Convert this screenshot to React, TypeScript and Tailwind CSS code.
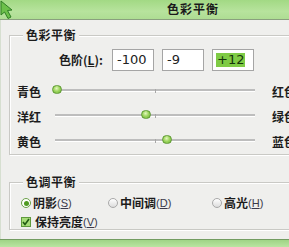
import React from "react";

const cjk = "font-['Noto_Sans_CJK_SC',sans-serif]";

function Slider({ left, right, value }: { left: string; right: string; value: number }) {
  const center = 2 + (value + 100) * 0.98;
  return (
    <div className="flex items-center h-[25px] pl-[7px]">
      <span className="w-[38px] text-[12px] font-semibold text-[#1c1c1c] leading-none">{left}</span>
      <div className="relative w-[200px] h-[10px] flex items-center -mt-[3px]">
        <div className="w-full h-[3px] border-t-2 border-[#bdbdbd] border-b border-b-white" />
        <div className="absolute left-[100px] top-[4px] w-px h-[4px] bg-[#a8a8a8]" />
        <div
          className="absolute top-[0px] w-[10px] h-[9px] rounded-full border border-[#5e9a34] bg-[radial-gradient(circle_at_45%_35%,#e4f8c0_0%,#9fd660_45%,#6cb234_100%)]"
          style={{ left: `${center - 5}px` }}
        />
      </div>
      <span className="ml-[17px] text-[12px] font-semibold text-[#1c1c1c] leading-none whitespace-nowrap">{right}</span>
    </div>
  );
}

function Radio({ checked, label, acc }: { checked?: boolean; label: string; acc: string }) {
  return (
    <div className="flex items-center">
      <span
        className={
          checked
            ? "w-[10px] h-[10px] rounded-full border border-[#6aa048] bg-white flex items-center justify-center"
            : "w-[10px] h-[10px] rounded-full border border-[#a9a9a9] bg-[linear-gradient(#ffffff,#dcdcdc)]"
        }
      >
        {checked && <span className="w-[5px] h-[5px] rounded-full bg-[#4f9a22]" />}
      </span>
      <span className="ml-[2px] text-[12px] font-semibold text-[#1c1c1c] leading-none">{label}</span>
      <span className="text-[11px] text-[#3a3a4a] leading-none font-['Liberation_Sans',sans-serif]">
        (<span className="underline">{acc}</span>)
      </span>
    </div>
  );
}

export default function App() {
  return (
    <div className={`w-[289px] h-[247px] overflow-hidden bg-[#efefed] flex flex-col ${cjk}`}>
      {/* title bar */}
      <div className="h-[20px] shrink-0 flex items-start bg-[linear-gradient(#a2d984,#b7e39d_60%,#aedd93)] border-b border-[#8aa07e]">
        <svg width="14" height="19" viewBox="0 0 14 19" className="shrink-0">
          <polygon points="1,1 1,15 4.5,12 8,18.5 11,17 7.5,10.5 12,10" fill="#6cc04a" stroke="#2f7d25" strokeWidth="1" />
        </svg>
        <span className="ml-[153px] mt-[2px] text-[12px] font-bold text-[#1a1a1a] leading-[14px] tracking-[1px]">色彩平衡</span>
      </div>

      <div className="flex-1 flex">
        <div className="w-[3px] bg-[#b3e199] border-r border-[#d6dfd0]" />
        <div className="flex-1 flex flex-col">
          {/* group 1 */}
          <div className="relative ml-[8px] mt-[15px] w-[300px] h-[120px] shrink-0 border border-[#c9c9c5] shadow-[inset_1px_1px_0_#ffffff,1px_1px_0_#ffffff] pt-[13px]">
            <span className="absolute left-[13px] top-[-8px] px-[3px] bg-[#efefed] text-[12px] font-bold text-[#1c1c1c] leading-[14px] tracking-[0.5px]">
              色彩平衡
            </span>
            <div className="flex items-center h-[22px] pl-[49px]">
              <span className="w-[53px] text-[12px] font-semibold text-[#1c1c1c] leading-none whitespace-nowrap">
                色阶(<span className="underline">L</span>):
              </span>
              <div className="flex gap-[8px] font-['DejaVu_Sans',sans-serif] text-[13px] text-[#222]">
                <div className="w-[42px] h-[22px] bg-white border border-[#a5a5a5] flex items-center pl-[4px]">-100</div>
                <div className="w-[42px] h-[22px] bg-white border border-[#a5a5a5] flex items-center pl-[4px]">-9</div>
                <div className="w-[42px] h-[22px] bg-white border border-[#a5a5a5] flex items-center pl-[3px]">
                  <span className="bg-[#7fcb45] px-[1px] leading-[14px] text-[#16340b]">+12</span>
                </div>
              </div>
            </div>
            <div className="mt-[8px]">
              <Slider left="青色" right="红色" value={-100} />
              <Slider left="洋红" right="绿色" value={-9} />
              <Slider left="黄色" right="蓝色" value={12} />
            </div>
          </div>

          {/* group 2 */}
          <div className="relative ml-[8px] mt-[27px] w-[300px] h-[48px] shrink-0 border border-[#c9c9c5] shadow-[inset_1px_1px_0_#ffffff,1px_1px_0_#ffffff] pt-[13px] pl-[11px] flex flex-col gap-[5px]">
            <span className="absolute left-[13px] top-[-8px] px-[3px] bg-[#efefed] text-[12px] font-bold text-[#1c1c1c] leading-[14px] tracking-[0.5px]">
              色调平衡
            </span>
            <div className="flex items-center h-[14px]">
              <div className="w-[87px]"><Radio checked label="阴影" acc="S" /></div>
              <div className="w-[104px]"><Radio label="中间调" acc="D" /></div>
              <Radio label="高光" acc="H" />
            </div>
            <div className="flex items-center h-[14px]">
              <svg width="10" height="10" viewBox="0 0 10 10" className="shrink-0">
                <rect x="0.5" y="0.5" width="9" height="9" fill="#a6dc78" stroke="#5f9a3c" />
                <polyline points="2,5 4,7.5 8,2" fill="none" stroke="#1f5a12" strokeWidth="1.6" />
              </svg>
              <span className="ml-[4px] text-[12px] font-semibold text-[#1c1c1c] leading-none">保持亮度</span>
              <span className="text-[11px] text-[#3a3a4a] leading-none font-['Liberation_Sans',sans-serif]">
                (<span className="underline">V</span>)
              </span>
            </div>
          </div>
        </div>
      </div>

      {/* bottom border */}
      <div className="h-[8px] shrink-0 border-t border-[#739c62] bg-[linear-gradient(#9fd485,#b9e4a1)]" />
    </div>
  );
}
